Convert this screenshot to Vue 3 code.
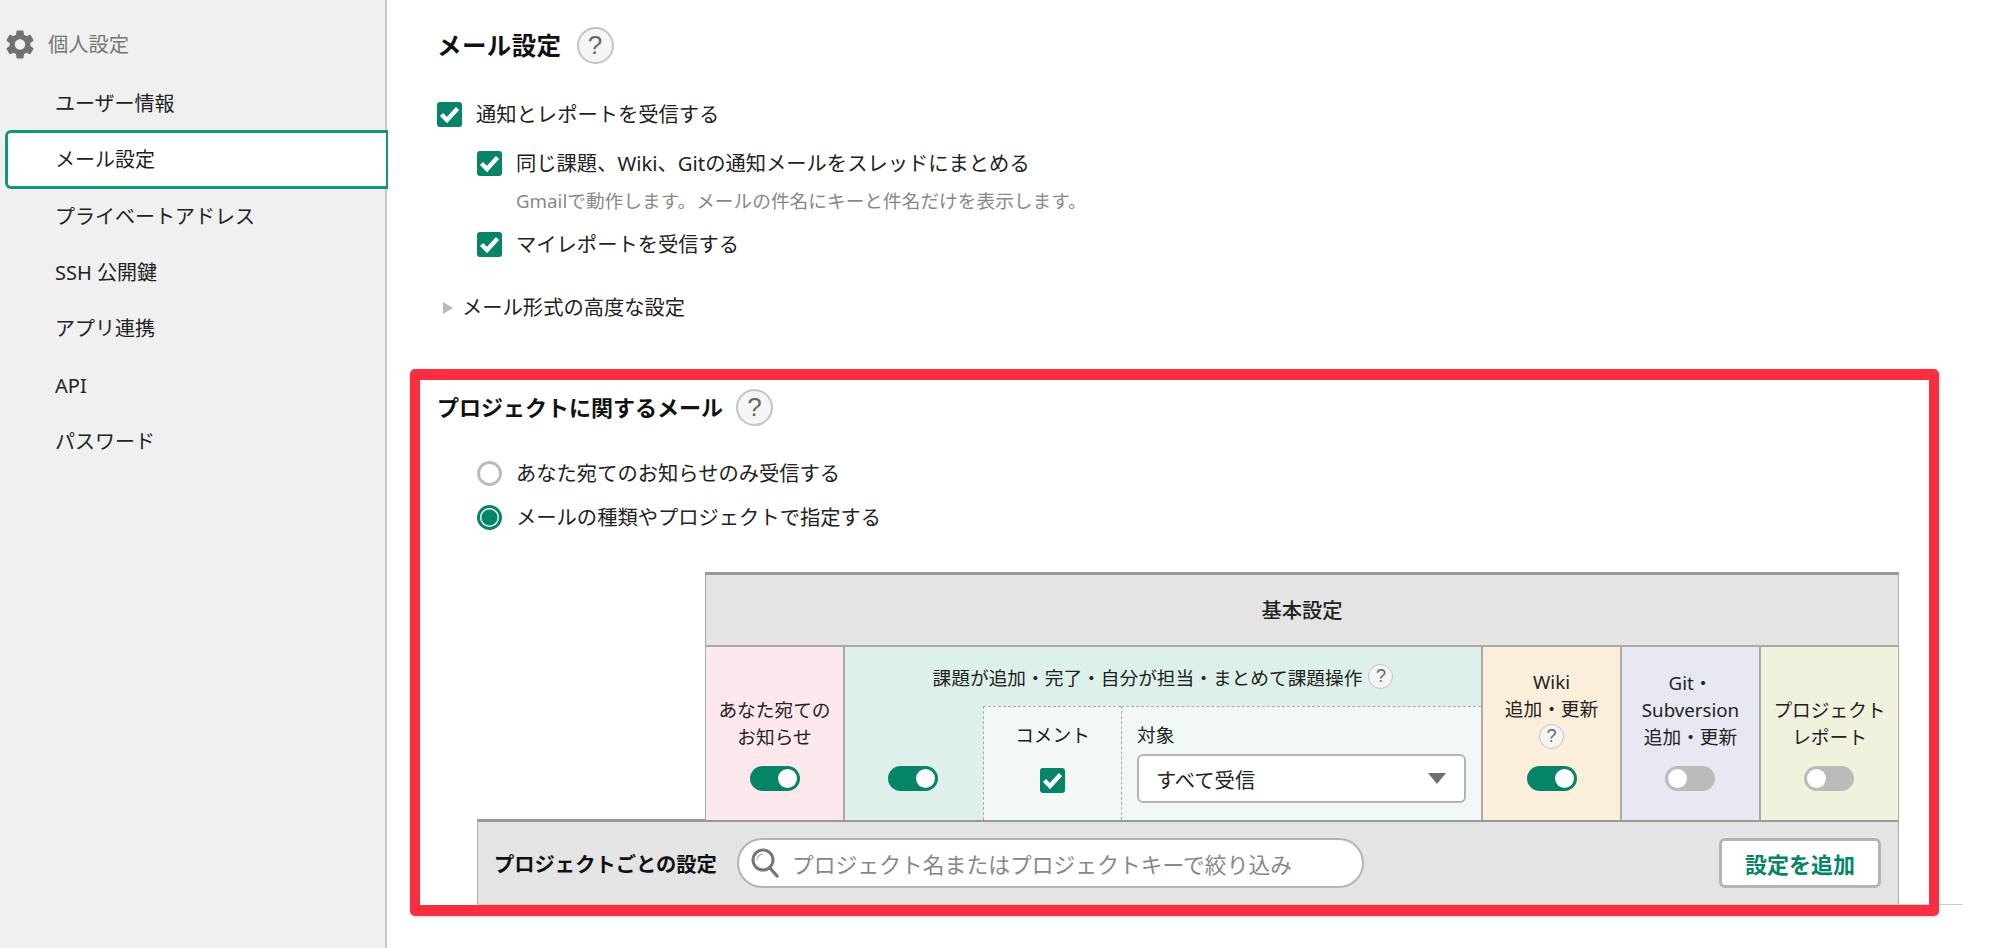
<script setup>
const navItems = [
  { label: 'ユーザー情報' },
  { label: 'メール設定', active: true },
  { label: 'プライベートアドレス' },
  { label: 'SSH 公開鍵' },
  { label: 'アプリ連携' },
  { label: 'API' },
  { label: 'パスワード' },
]
</script>

<template>
  <div class="page">
    <aside class="side">
      <div class="side-head">
        <svg class="gear" viewBox="2.4 2 19.2 20" aria-hidden="true">
          <path fill="#707070" d="M19.14 12.94c.04-.3.06-.61.06-.94 0-.32-.02-.64-.07-.94l2.03-1.58c.18-.14.23-.41.12-.61l-1.92-3.32c-.12-.22-.37-.29-.59-.22l-2.39.96c-.5-.38-1.03-.7-1.62-.94l-.36-2.54c-.04-.24-.24-.41-.48-.41h-3.84c-.24 0-.43.17-.47.41l-.36 2.54c-.59.24-1.13.57-1.62.94l-2.39-.96c-.22-.08-.47 0-.59.22L2.74 8.87c-.12.21-.08.47.12.61l2.03 1.58c-.05.3-.09.63-.09.94s.02.64.07.94l-2.03 1.58c-.18.14-.23.41-.12.61l1.92 3.32c.12.22.37.29.59.22l2.39-.96c.5.38 1.03.7 1.62.94l.36 2.54c.05.24.24.41.48.41h3.84c.24 0 .44-.17.47-.41l.36-2.54c.59-.24 1.13-.56 1.62-.94l2.39.96c.22.08.47 0 .59-.22l1.92-3.32c.12-.22.07-.47-.12-.61l-2.01-1.58zM12 15.6c-1.98 0-3.6-1.62-3.6-3.6s1.62-3.6 3.6-3.6 3.6 1.62 3.6 3.6-1.62 3.6-3.6 3.6z"/>
        </svg>
        <span>個人設定</span>
      </div>
      <nav class="nav">
        <a v-for="item in navItems" :key="item.label" class="nav-item" :class="{ active: item.active }">{{ item.label }}</a>
      </nav>
    </aside>

    <main class="main">
      <div class="title-row">
        <h2 class="title">メール設定</h2>
        <span class="help big">?</span>
      </div>

      <label class="check-row first">
        <span class="check"><svg viewBox="0 0 25 25"><path d="M4.5 12.5l5.5 5.5 10.5-11.5" /></svg></span>
        <span>通知とレポートを受信する</span>
      </label>
      <label class="check-row indent second">
        <span class="check"><svg viewBox="0 0 25 25"><path d="M4.5 12.5l5.5 5.5 10.5-11.5" /></svg></span>
        <span>同じ課題、Wiki、Gitの通知メールをスレッドにまとめる</span>
      </label>
      <p class="hint">Gmailで動作します。メールの件名にキーと件名だけを表示します。</p>
      <label class="check-row indent third">
        <span class="check"><svg viewBox="0 0 25 25"><path d="M4.5 12.5l5.5 5.5 10.5-11.5" /></svg></span>
        <span>マイレポートを受信する</span>
      </label>

      <div class="disclosure">
        <span class="tri"></span>
        <span>メール形式の高度な設定</span>
      </div>

      <section class="section">
        <div class="title-row">
          <h3 class="subtitle">プロジェクトに関するメール</h3>
          <span class="help big">?</span>
        </div>

        <label class="radio-row r1">
          <span class="radio"></span>
          <span>あなた宛てのお知らせのみ受信する</span>
        </label>
        <label class="radio-row r2">
          <span class="radio on"></span>
          <span>メールの種類やプロジェクトで指定する</span>
        </label>

        <div class="table">
          <div class="table-head">基本設定</div>
          <div class="cols">
            <div class="col pink">
              <div class="col-label">あなた宛ての<br>お知らせ</div>
              <span class="toggle on"></span>
            </div>
            <div class="col-green">
              <div class="green-head">
                <span>課題が追加・完了・自分が担当・まとめて課題操作</span>
                <span class="help small">?</span>
              </div>
              <div class="green-body">
                <div class="green-toggle"><span class="toggle on"></span></div>
                <div class="comment">
                  <span class="sub-label">コメント</span>
                  <span class="check"><svg viewBox="0 0 25 25"><path d="M4.5 12.5l5.5 5.5 10.5-11.5" /></svg></span>
                </div>
                <div class="target">
                  <span class="sub-label">対象</span>
                  <div class="select">
                    <span>すべて受信</span>
                    <span class="caret"></span>
                  </div>
                </div>
              </div>
            </div>
            <div class="col orange">
              <div class="col-label">Wiki<br>追加・更新</div>
              <span class="help small stacked">?</span>
              <span class="toggle on"></span>
            </div>
            <div class="col purple">
              <div class="col-label">Git・<br>Subversion<br>追加・更新</div>
              <span class="toggle nudge"></span>
            </div>
            <div class="col olive">
              <div class="col-label">プロジェクト<br>レポート</div>
              <span class="toggle nudge"></span>
            </div>
          </div>
        </div>

        <div class="list-wrap">
          <div class="bar">
            <span class="bar-title">プロジェクトごとの設定</span>
            <div class="search">
              <svg class="lens" viewBox="0 0 28 30" aria-hidden="true">
                <circle cx="12" cy="12" r="10" fill="none" stroke="#777" stroke-width="3" />
                <path d="M19 20l7 8" stroke="#777" stroke-width="3.4" stroke-linecap="round" />
                <path d="M6 12a6 6 0 0 1 6-6" fill="none" stroke="#bbb" stroke-width="1.5" />
              </svg>
              <span class="placeholder">プロジェクト名またはプロジェクトキーで絞り込み</span>
            </div>
            <button class="add-btn" type="button">設定を追加</button>
          </div>
        </div>

        <div class="highlight"></div>
      </section>
    </main>
  </div>
</template>

<style>
html, body { margin: 0; padding: 0; background: #fff; }
</style>

<style scoped>
.page {
  display: flex;
  width: 2000px;
  height: 948px;
  overflow: hidden;
  background: #fff;
  color: #222;
  font-family: "Noto Sans", "Noto Sans CJK JP", sans-serif;
  font-size: 20.3px;
}
.side {
  width: 385px;
  flex: none;
  background: #f0f0f0;
  border-right: 2px solid #c8c8c8;
  position: relative;
  padding-top: 30px;
}
.side-head {
  display: flex;
  align-items: center;
  gap: 14px;
  padding-left: 6px;
  height: 29px;
  color: #777;
  line-height: 29px;
}
.gear { width: 28px; height: 29px; flex: none; }
.nav { display: flex; flex-direction: column; margin-top: 17px; padding-left: 5px; font-size: 20px; }
.nav-item {
  display: block;
  height: 56.3px;
  line-height: 56.3px;
  padding-left: 50px;
  box-sizing: border-box;
  white-space: nowrap;
}
.nav-item.active {
  background: #fff;
  border: 3px solid #12957a;
  border-right-width: 2px;
  border-radius: 6px 0 0 6px;
  line-height: 53px;
  padding-left: 47px;
  height: 59px;
  margin: -2.35px -3px -0.35px 0;
  position: relative;
}
.main {
  flex: 1;
  padding: 27px 0 0 50px;
  min-width: 0;
}
.title-row { display: flex; align-items: center; height: 37px; }
.title { margin: 0 15px 0 0; padding-bottom: 2px; font-size: 24.5px; font-weight: 700; color: #111; letter-spacing: 0.4px; }
.subtitle { margin: 0 13px 0 0; padding-bottom: 4px; font-size: 22px; font-weight: 700; color: #111; }
.help {
  display: inline-flex;
  align-items: center;
  justify-content: center;
  box-sizing: border-box;
  border-radius: 50%;
  border: 2px solid #c4c4c4;
  background: #f5f5f5;
  color: #666;
  font-family: "Liberation Sans", sans-serif;
  flex: none;
}
.help.big { width: 37px; height: 37px; font-size: 26px; }
.help.small { width: 25px; height: 25px; font-size: 18px; border-width: 1.5px; margin-left: 6px; }
.help.stacked { margin: 2px 0 17px; }
.check-row {
  display: flex;
  align-items: center;
  gap: 14px;
  height: 25px;
  line-height: 25px;
}
.check-row.first { margin-top: 38px; }
.check-row.indent { margin-left: 40px; }
.check-row.second { margin-top: 24px; }
.check-row.third { margin-top: 18px; }
.check {
  display: block;
  width: 25px;
  height: 25px;
  flex: none;
  border-radius: 3px;
  background: #068468;
}
.check svg { display: block; width: 25px; height: 25px; }
.check path { fill: none; stroke: #fff; stroke-width: 4.4; }
.hint {
  margin: 12px 0 0 79px;
  font-size: 18.7px;
  line-height: 26px;
  color: #888;
}
.disclosure {
  display: flex;
  align-items: center;
  height: 25px;
  line-height: 25px;
  margin-top: 38px;
  padding-left: 6px;
}
.tri {
  width: 0;
  height: 0;
  border-left: 10px solid #bbb;
  border-top: 6px solid transparent;
  border-bottom: 6px solid transparent;
  margin-right: 9px;
}
.section { position: relative; margin-top: 69px; }
.highlight {
  position: absolute;
  left: -27px;
  top: -20px;
  width: 1529px;
  height: 547px;
  box-sizing: border-box;
  border: 11px solid #fb2d40;
  border-left-width: 10px;
  border-right-width: 10px;
  border-radius: 5px;
  box-shadow: 0 1px 3px rgba(0, 0, 0, 0.15);
  pointer-events: none;
}
.radio-row {
  display: flex;
  align-items: center;
  gap: 14px;
  height: 25px;
  line-height: 25px;
  margin-left: 40px;
}
.r1 { margin-top: 35px; }
.r2 { margin-top: 19px; }
.radio {
  width: 25px;
  height: 25px;
  box-sizing: border-box;
  border-radius: 50%;
  border: 3px solid #bbb;
  background: #fff;
  flex: none;
}
.radio.on {
  border-color: #068468;
  background: radial-gradient(circle, #068468 0 7.5px, #fff 8.5px);
}
.table {
  margin: 42px 0 0 268px;
  width: 1194px;
  box-sizing: border-box;
  border-top: 3px solid #999;
  border-left: 1px solid #aaa;
  border-right: 1px solid #aaa;
  font-size: 18.7px;
}
.table-head {
  height: 70px;
  line-height: 70px;
  text-align: center;
  background: #e4e4e4;
  font-weight: 500;
  font-size: 20.3px;
  border-bottom: 2px solid #aaa;
}
.cols { display: flex; height: 173px; }
.col {
  display: flex;
  flex-direction: column;
  align-items: center;
  justify-content: flex-end;
  padding-bottom: 29px;
  box-sizing: border-box;
  text-align: center;
  flex: none;
  border-left: 2px solid #aaa;
}
.col:first-child { border-left: 0; }
.pink { width: 137px; background: #fde8ee; }
.orange { width: 139px; background: #fbefdc; }
.purple { width: 139px; background: #e8e8f2; }
.olive { width: 139px; background: #f1f2de; }
.col-label { line-height: 27px; margin-bottom: 16px; white-space: nowrap; }
.orange .col-label { margin-bottom: 0; }
.toggle {
  display: block;
  position: relative;
  width: 50px;
  height: 25px;
  border-radius: 13px;
  background: #bbb;
  flex: none;
}
.toggle.nudge { margin-right: 2px; }
.toggle::after {
  content: "";
  position: absolute;
  top: 3px;
  left: 3px;
  width: 19px;
  height: 19px;
  border-radius: 50%;
  background: #fff;
}
.toggle.on { background: #068468; }
.toggle.on::after { left: 28px; }
.col-green {
  flex: none;
  width: 638px;
  display: flex;
  flex-direction: column;
  background: #ddf0e9;
  border-left: 2px solid #aaa;
  box-sizing: border-box;
}
.green-head {
  height: 59px;
  display: flex;
  align-items: center;
  justify-content: center;
  flex: none;
}
.green-body { flex: 1; display: flex; }
.green-toggle {
  width: 138px;
  flex: none;
  display: flex;
  flex-direction: column;
  align-items: center;
  justify-content: flex-end;
  padding: 0 3px 29px 0;
  box-sizing: border-box;
}
.comment, .target {
  background: #f2f8f6;
  border-top: 1.5px dashed #aaa;
  border-left: 1.5px dashed #aaa;
  box-sizing: border-box;
}
.comment {
  width: 138px;
  flex: none;
  display: flex;
  flex-direction: column;
  align-items: center;
}
.comment .check { margin-top: 20px; }
.target { flex: 1; padding: 0 15px 0 15px; display: flex; flex-direction: column; }
.sub-label { line-height: 27px; margin-top: 14px; display: block; }
.select {
  margin-top: 6px;
  height: 49px;
  box-sizing: border-box;
  border: 2px solid #b4b4b4;
  border-radius: 6px;
  background: #fff;
  display: flex;
  align-items: center;
  justify-content: space-between;
  padding: 0 18px 0 17px;
  font-size: 20.3px;
}
.caret {
  width: 0;
  height: 0;
  border-top: 11px solid #6f6f6f;
  border-left: 9px solid transparent;
  border-right: 9px solid transparent;
}
.list-wrap {
  margin: -1px 0 0 40px;
  width: 1486px;
  border-bottom: 1px solid #ccc;
}
.bar {
  width: 1422px;
  height: 85px;
  box-sizing: border-box;
  background: #e4e4e4;
  border-top: 3px solid #999;
  border-left: 1px solid #aaa;
  border-right: 1px solid #aaa;
  display: flex;
  align-items: center;
  padding: 0 17px 0 16px;
}
.bar-title { font-weight: 700; color: #111; white-space: nowrap; width: 243px; flex: none; }
.search {
  width: 627px;
  height: 50px;
  box-sizing: border-box;
  border: 2px solid #b4b4b4;
  border-radius: 25px;
  background: #fff;
  display: flex;
  align-items: center;
  padding-left: 12px;
  flex: none;
}
.lens { width: 28px; height: 30px; flex: none; margin-right: 13px; }
.placeholder { color: #888; white-space: nowrap; font-size: 21.8px; }
.add-btn {
  margin-left: auto;
  width: 162px;
  height: 50px;
  box-sizing: border-box;
  border: 3px solid #b4b4b4;
  border-radius: 6px;
  background: #fff;
  color: #068468;
  font: 700 22px "Noto Sans", "Noto Sans CJK JP", sans-serif;
  padding: 0;
}
</style>
